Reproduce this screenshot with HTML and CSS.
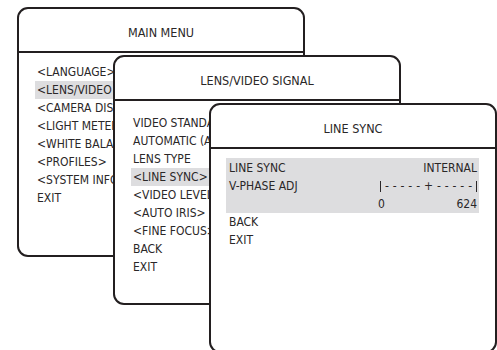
FILE: index.html
```html
<!DOCTYPE html>
<html lang="en">
<head>
    <meta charset="UTF-8">
    <meta name="viewport" content="width=device-width, initial-scale=1.0">
    <title>Camera OSD menus</title>
    <link rel="stylesheet" href="styles.css">
</head>
<body>

    <div class="desk">

        <!-- Main menu -->
        <section class="menu menu-main">
            <header class="menu-head">MAIN MENU</header>
            <ul class="menu-list">
                <li>&lt;LANGUAGE&gt;</li>
                <li class="sel">&lt;LENS/VIDEO SIGNAL&gt;</li>
                <li>&lt;CAMERA DISPLAY&gt;</li>
                <li>&lt;LIGHT METERING&gt;</li>
                <li>&lt;WHITE BALANCE&gt;</li>
                <li>&lt;PROFILES&gt;</li>
                <li>&lt;SYSTEM INFO&gt;</li>
                <li>EXIT</li>
            </ul>
        </section>

        <!-- Lens / video signal -->
        <section class="menu menu-lens">
            <header class="menu-head">LENS/VIDEO SIGNAL</header>
            <ul class="menu-list">
                <li>VIDEO STANDARD</li>
                <li>AUTOMATIC (AGC)</li>
                <li>LENS TYPE</li>
                <li class="sel">&lt;LINE SYNC&gt;</li>
                <li>&lt;VIDEO LEVEL&gt;</li>
                <li>&lt;AUTO IRIS&gt;</li>
                <li>&lt;FINE FOCUS&gt;</li>
                <li>BACK</li>
                <li>EXIT</li>
            </ul>
        </section>

        <!-- Line sync -->
        <section class="menu menu-sync">
            <header class="menu-head">LINE SYNC</header>
            <div class="menu-list">
                <div class="sel-group">
                    <div class="row">
                        <span>LINE SYNC</span>
                        <span>INTERNAL</span>
                    </div>
                    <div class="row">
                        <span>V-PHASE ADJ</span>
                        <span class="slider">
                            <span class="bar"></span><span>-</span><span>-</span><span>-</span><span>-</span><span>-</span><span>+</span><span>-</span><span>-</span><span>-</span><span>-</span><span>-</span><span class="bar"></span>
                        </span>
                    </div>
                    <div class="row">
                        <span></span>
                        <span class="range"><span>0</span><span>624</span></span>
                    </div>
                </div>
                <div class="row">BACK</div>
                <div class="row">EXIT</div>
            </div>
        </section>

    </div>

</body>
</html>
```

FILE: styles.css
```css
body {
    margin: 0;
    background-color: #fff;
    font-family: "DejaVu Sans Condensed", "Liberation Sans", sans-serif;
    font-size: 12px;
    color: #2a2728;
}
.desk {
    position: relative;
    width: 497px;
    height: 350px;
    overflow: hidden;
}

/* each menu is a "window" laid on the desk */
.menu {
    position: absolute;
    width: 288px;
    height: 250px;
    box-sizing: border-box;
    border: 2px solid #231f20;
    border-radius: 11px;
    background-color: #fff;
    overflow: hidden;
}
.menu-main { left: 17px; top: 7px; }
.menu-lens { left: 113px; top: 55px; }
.menu-sync { left: 209px; top: 103px; }

.menu-head {
    height: 44px;
    box-sizing: border-box;
    padding-top: 4px;
    display: flex;
    align-items: center;
    justify-content: center;
    font-size: 12.5px;
    border-bottom: 2px solid #231f20;
}
.menu-list {
    list-style: none;
    margin: 0;
    padding: 10px 16px 0 16px;
    line-height: 18px;
}
.menu-lens .menu-list {
    padding-top: 13px;
}
.menu-list li {
    padding: 0 2px;
    white-space: nowrap;
}
.sel {
    background-color: #dddddf;
}

/* line sync panel */
.menu-sync .menu-list {
    padding: 9px 16px 0 15px;
}
.sel-group {
    background-color: #dddddf;
    padding-top: 1px;
}
.row {
    display: flex;
    justify-content: space-between;
    align-items: center;
    padding: 0 2px 0 3px;
    white-space: nowrap;
}
.slider {
    width: 97px;
    display: flex;
    justify-content: space-between;
    align-items: center;
}
.slider .bar {
    width: 1px;
    height: 11px;
    background-color: #2a2728;
}
.range {
    width: 99px;
    display: flex;
    justify-content: space-between;
}
```
